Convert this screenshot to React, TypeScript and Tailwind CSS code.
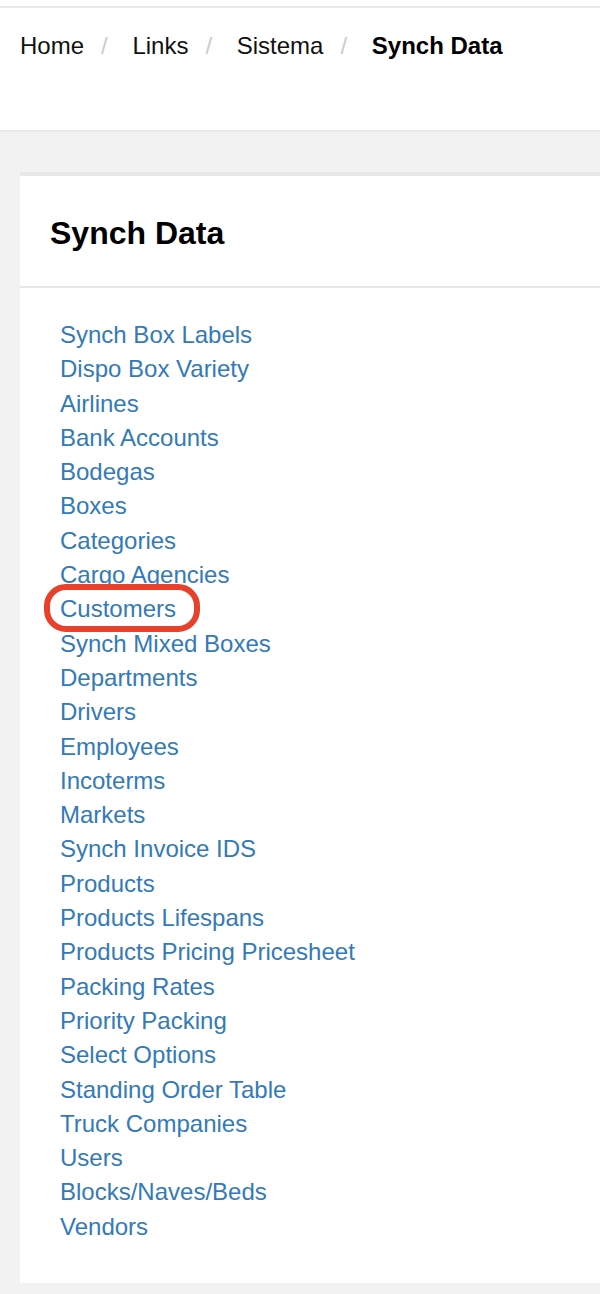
import React from "react";

const crumbs = ["Home", "Links", "Sistema"];

const links = [
  "Synch Box Labels",
  "Dispo Box Variety",
  "Airlines",
  "Bank Accounts",
  "Bodegas",
  "Boxes",
  "Categories",
  "Cargo Agencies",
  "Customers",
  "Synch Mixed Boxes",
  "Departments",
  "Drivers",
  "Employees",
  "Incoterms",
  "Markets",
  "Synch Invoice IDS",
  "Products",
  "Products Lifespans",
  "Products Pricing Pricesheet",
  "Packing Rates",
  "Priority Packing",
  "Select Options",
  "Standing Order Table",
  "Truck Companies",
  "Users",
  "Blocks/Naves/Beds",
  "Vendors",
];

export default function App() {
  return (
    <main className="min-h-[1294px] bg-[#f2f2f2] font-['Liberation_Sans',Arial,sans-serif] text-[24px] leading-[34.29px] text-[#111]">
      {/* Breadcrumb bar */}
      <div className="bg-white pt-[6px]">
        <div className="h-[126px] border-t-2 border-b-2 border-[#e8e8e8] pt-[21px]">
          <ol className="flex pl-[20px]">
            {crumbs.map((c) => (
              <li key={c} className="flex">
                <span>{c}</span>
                <span className="pl-[17px] pr-[18px] text-[#ccc]">/{"\u00a0"}</span>
              </li>
            ))}
            <li className="font-bold text-black">Synch Data</li>
          </ol>
        </div>
      </div>

      {/* Card */}
      <div className="pt-[40px] pb-[11px] pl-[20px]">
        <section className="border-t-4 border-[#e7e7e7] bg-white">
          <div className="border-b-2 border-[#e7e7e7] pl-[30px] pt-[40px] pb-[35px]">
            <h3 className="text-[32px] font-bold leading-[35px] text-black">Synch Data</h3>
          </div>
          <ul className="pl-[40px] pt-[30px] pb-[39px]">
            {links.map((l) => (
              <li key={l}>
                {l === "Customers" ? (
                  <a href="#" className="relative inline-block text-[#337ab7]">
                    {l}
                    <span className="pointer-events-none absolute -top-[8px] -bottom-[5px] -left-[16px] -right-[24px] rounded-[22px] border-[6px] border-[#e8402a]" />
                  </a>
                ) : (
                  <a href="#" className="text-[#337ab7]">
                    {l}
                  </a>
                )}
              </li>
            ))}
          </ul>
        </section>
      </div>
    </main>
  );
}
